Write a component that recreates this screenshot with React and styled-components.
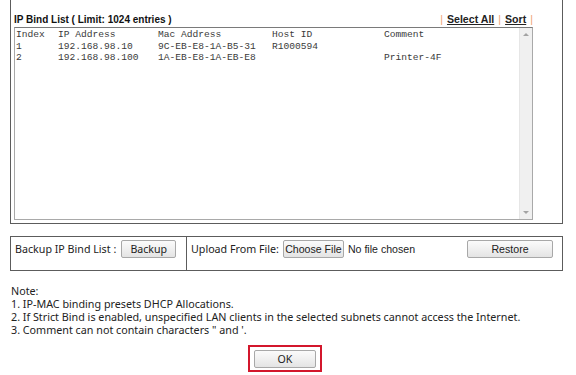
import React from "react";
import styled, { createGlobalStyle } from "styled-components";

const GlobalStyle = createGlobalStyle`
  body {
    margin: 0;
    background: #ffffff;
    font-family: "Liberation Sans", Arial, sans-serif;
  }
`;

const Page = styled.div`
  width: 553px;
  padding-left: 10px;
`;

const ListPanel = styled.div`
  border: 1px solid #5c5c5c;
  border-top: none;
  padding: 10px 29px 3px 3px;
`;

const TitleRow = styled.div`
  display: flex;
  justify-content: space-between;
  align-items: flex-end;
  height: 15px;
  margin-bottom: 2px;
`;

const Title = styled.h3`
  margin: 0;
  font-size: 10px;
  font-weight: bold;
  color: #111;
`;

const Links = styled.div`
  display: flex;
  gap: 4px;
  font-size: 10.6px;
  font-weight: bold;
`;

const Sep = styled.span`
  color: #f0a070;
  font-weight: normal;
`;

const LinkText = styled.a`
  color: #222;
  text-decoration: underline;
`;

const ListBox = styled.div`
  display: flex;
  height: 191px;
  border: 1px solid #a9a9a9;
  border-top-color: #7a7a7a;
  background: #fff;
`;

const ListBody = styled.div`
  flex: 1;
  padding: 1px 1px;
  font-family: "Liberation Mono", "Courier New", monospace;
  font-size: 9.6px;
  line-height: 11.5px;
  color: #3a3a3a;
`;

const Row = styled.div`
  display: grid;
  grid-template-columns: 42px 100px 114px 112px 1fr;
  white-space: pre;
`;

const Scrollbar = styled.div`
  width: 13px;
  background: #f0f0f0;
  border-left: 1px solid #e6e6e6;
  display: flex;
  flex-direction: column;
  justify-content: space-between;
  align-items: center;
  padding: 5px 0;
  box-sizing: border-box;
`;

const Arrow = styled.div`
  width: 0;
  height: 0;
  border-left: 3px solid transparent;
  border-right: 3px solid transparent;
  ${(p) =>
    p.down
      ? "border-top: 3px solid #a3a3a3;"
      : "border-bottom: 3px solid #a3a3a3;"}
`;

const FileTable = styled.div`
  display: flex;
  margin-top: 12px;
  height: 33px;
  border: 1px solid #5c5c5c;
`;

const Cell = styled.div`
  display: flex;
  align-items: flex-start;
  padding: 3px ${(p) => p.right || 4}px 0 4px;
  gap: ${(p) => p.gap || 5}px;
  ${(p) => (p.divider ? "border-left: 1px solid #5c5c5c;" : "")}
  ${(p) => (p.width ? `width: ${p.width}px;` : "flex: 1;")}
  box-sizing: border-box;
`;

const Label = styled.span`
  font-family: "Noto Sans", "DejaVu Sans", sans-serif;
  font-size: 10.7px;
  line-height: 18px;
  color: #222;
  white-space: nowrap;
`;

const PlainText = styled.span`
  font-size: 10.6px;
  line-height: 18px;
  color: #222;
  white-space: nowrap;
`;

const Button = styled.button`
  height: 18px;
  width: ${(p) => p.w}px;
  padding: 0;
  border: 1px solid #a8a8a8;
  border-radius: 2px;
  background: linear-gradient(#fbfbfb, #e4e4e4);
  font-family: ${(p) =>
    p.tahoma
      ? `"Noto Sans", "DejaVu Sans", sans-serif`
      : `"Liberation Sans", Arial, sans-serif`};
  font-size: 10.6px;
  color: #222;
  white-space: nowrap;
  ${(p) => (p.push ? "margin-left: auto;" : "")}
`;

const Notes = styled.div`
  margin-top: 14px;
  padding-left: 1px;
  font-family: "Noto Sans", "DejaVu Sans", sans-serif;
  font-size: 10.75px;
  line-height: 13px;
  color: #222;
`;

const Footer = styled.div`
  display: flex;
  justify-content: center;
  margin-top: 8px;
  padding-right: 3px;
`;

const Highlight = styled.div`
  border: 2px solid #d3172c;
  padding: 2px 4px;
`;

const rows = [
  ["Index", "IP Address", "Mac Address", "Host ID", "Comment"],
  ["1", "192.168.98.10", "9C-EB-E8-1A-B5-31", "R1000594", ""],
  ["2", "192.168.98.100", "1A-EB-E8-1A-EB-E8", "", "Printer-4F"],
];

const App = () => {
  return (
    <Page>
      <GlobalStyle />
      <ListPanel>
        <TitleRow>
          <Title>IP Bind List ( Limit: 1024 entries )</Title>
          <Links>
            <Sep>|</Sep>
            <LinkText>Select All</LinkText>
            <Sep>|</Sep>
            <LinkText>Sort</LinkText>
            <Sep>|</Sep>
          </Links>
        </TitleRow>
        <ListBox>
          <ListBody>
            {rows.map((r, i) => (
              <Row key={i}>
                {r.map((c, j) => (
                  <span key={j}>{c}</span>
                ))}
              </Row>
            ))}
          </ListBody>
          <Scrollbar>
            <Arrow />
            <Arrow down />
          </Scrollbar>
        </ListBox>
      </ListPanel>

      <FileTable>
        <Cell width={175}>
          <Label>Backup IP Bind List :</Label>
          <Button w={55} tahoma>Backup</Button>
        </Cell>
        <Cell divider right={9} gap={4}>
          <Label>Upload From File:</Label>
          <Button w={61}>Choose File</Button>
          <PlainText>No file chosen</PlainText>
          <Button w={86} push>Restore</Button>
        </Cell>
      </FileTable>

      <Notes>
        <div>Note:</div>
        <div>1. IP-MAC binding presets DHCP Allocations.</div>
        <div>
          2. If Strict Bind is enabled, unspecified LAN clients in the selected
          subnets cannot access the Internet.
        </div>
        <div>3. Comment can not contain characters " and '.</div>
      </Notes>

      <Footer>
        <Highlight>
          <Button w={62} tahoma>OK</Button>
        </Highlight>
      </Footer>
    </Page>
  );
};

export default App;
